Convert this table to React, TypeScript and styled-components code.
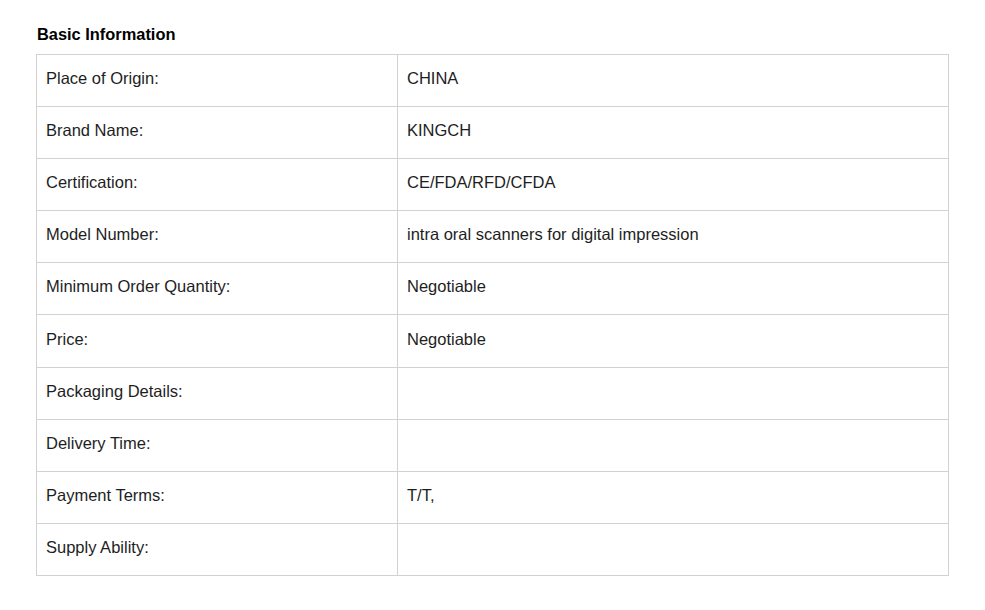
import React from "react";
import styled, { createGlobalStyle } from "styled-components";

const Global = createGlobalStyle`
  html, body { margin: 0; padding: 0; background: #fff; }
  body { font-family: "Liberation Sans", Arial, sans-serif; color: #222; }
`;

const Page = styled.div`
  padding: 25px 36px 0 36px;
  width: 913px;
`;

const Title = styled.h3`
  margin: 0 0 11px 1px;
  font-size: 16.4px;
  line-height: 18px;
  font-weight: bold;
  color: #000;
`;

const Table = styled.table`
  width: 913px;
  border-collapse: collapse;
  table-layout: fixed;
`;

const Cell = styled.td<{ $label?: boolean }>`
  border: 1px solid #d2d2d2;
  height: 52.1px;
  box-sizing: border-box;
  padding: 0 9px 5px 9px;
  font-size: 16.5px;
  line-height: 18px;
  color: #1e1e1e;
  width: ${(p) => (p.$label ? "361px" : "auto")};
  vertical-align: middle;
`;

const rows: [string, string][] = [
  ["Place of Origin:", "CHINA"],
  ["Brand Name:", "KINGCH"],
  ["Certification:", "CE/FDA/RFD/CFDA"],
  ["Model Number:", "intra oral scanners for digital impression"],
  ["Minimum Order Quantity:", "Negotiable"],
  ["Price:", "Negotiable"],
  ["Packaging Details:", ""],
  ["Delivery Time:", ""],
  ["Payment Terms:", "T/T,"],
  ["Supply Ability:", ""],
];

export default function App() {
  return (
    <>
      <Global />
      <Page>
        <Title>Basic Information</Title>
        <Table>
          <tbody>
            {rows.map(([k, v]) => (
              <tr key={k}>
                <Cell $label>{k}</Cell>
                <Cell>{v}</Cell>
              </tr>
            ))}
          </tbody>
        </Table>
      </Page>
    </>
  );
}
